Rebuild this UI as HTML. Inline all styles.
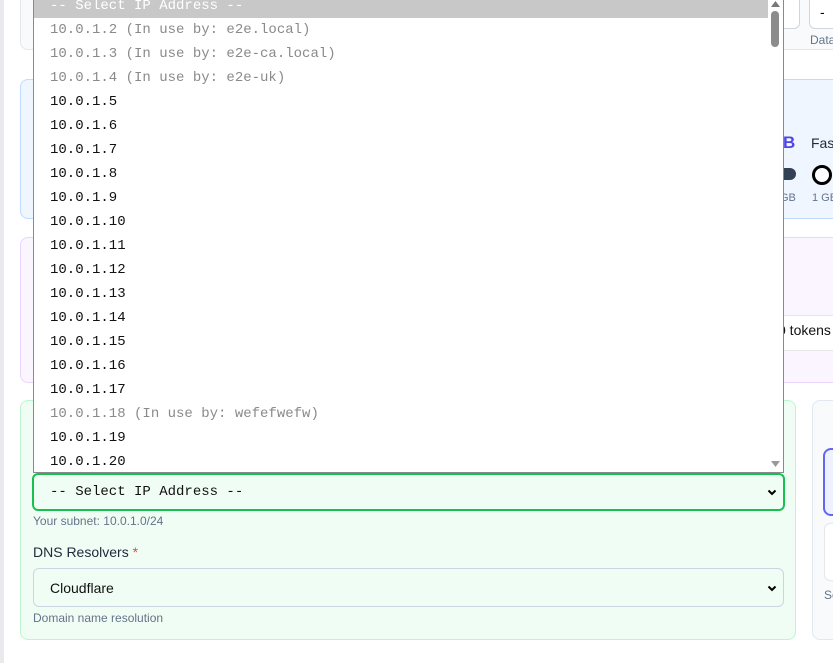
<!DOCTYPE html>
<html><head><style>
body{margin:0;width:833px;height:663px;overflow:hidden;background:#fff;font-family:"Liberation Sans",sans-serif;position:relative}
.strip{position:absolute;left:0;top:0;width:4px;height:663px;background:#e8eaee}
.card{position:absolute;border-radius:8px;box-sizing:border-box}
.list{position:absolute;left:33px;top:-7px;width:751px;height:480px;background:#fff;border:1px solid #8a8a8a;box-sizing:border-box;font-family:"Liberation Mono",monospace;font-size:14px;overflow:hidden}
.row{height:24px;line-height:24px;padding-left:16px;color:#111}
.dis{color:#8a8a8a}
.sel{background:#c8c8c8;color:#fff}
.sb{position:absolute;right:0;top:0;width:15px;height:100%;background:#fff}
.thumb{position:absolute;right:4px;top:16px;width:8px;height:36px;border-radius:4px;background:#8c8c8c}
.select{position:absolute;box-sizing:border-box;border-radius:6px;font-size:14px;display:flex;align-items:center;padding-left:16px}
.chev{position:absolute;right:6px;top:50%;margin-top:-5px}
.small{position:absolute;font-size:12px;color:#64748b;white-space:nowrap}
</style></head><body>
<div class="strip"></div>
<div class="card" style="left:20px;top:-10px;width:830px;height:60px;background:#f9fafb;border:1px solid #e5e7eb"></div>
<div style="position:absolute;left:730px;top:-5px;width:68px;height:32px;border:1px solid #d1d5db;border-radius:6px;background:#fff"></div>
<div style="position:absolute;left:809px;top:-5px;width:40px;height:32px;border:1px solid #d1d5db;border-radius:6px;background:#fff;font-size:14px;line-height:32px;padding-left:10px">-</div>
<div class="small" style="left:810px;top:33px;color:#64748b">Data</div>
<div class="card" style="left:20px;top:79px;width:830px;height:140px;background:#eff6ff;border:1px solid #bfdbfe"></div>
<div style="position:absolute;left:783px;top:133px;font-size:17px;font-weight:bold;color:#4f46e5">B</div>
<div style="position:absolute;left:811px;top:135px;font-size:14px;color:#1f2937">Fas</div>
<div style="position:absolute;left:770px;top:168px;width:26px;height:12px;border-radius:6px;background:#334155"></div>
<div style="position:absolute;left:812px;top:165px;width:14px;height:14px;border-radius:50%;border:3px solid #000;background:#fff"></div>
<div class="small" style="left:780px;top:192px;font-size:11px">GB</div>
<div class="small" style="left:812px;top:192px;font-size:11px">1 GB</div>
<div class="card" style="left:20px;top:237px;width:830px;height:146px;background:#faf5ff;border:1px solid #e9d5ff"></div>
<div style="position:absolute;left:700px;top:315px;width:150px;height:34px;border:1px solid #e5e7eb;border-radius:6px;background:#fff"></div>
<div style="position:absolute;left:778px;top:322px;font-size:14px;color:#111;white-space:nowrap">0 tokens</div>
<div class="card" style="left:20px;top:400px;width:776px;height:240px;background:#f0fdf4;border:1px solid #bbf7d0"></div>
<div class="card" style="left:812px;top:400px;width:40px;height:240px;background:#f8fafc;border:1px solid #e2e8f0"></div>
<div style="position:absolute;left:823px;top:448px;width:30px;height:64px;border:2px solid #6366f1;border-radius:8px;background:#eef2ff"></div>
<div style="position:absolute;left:824px;top:523px;width:30px;height:56px;border-radius:6px;background:#fff;border:1px solid #e5e7eb"></div>
<div class="small" style="left:824px;top:588px">Se</div>
<div class="select" style="left:32px;top:473px;width:753px;height:38px;border:2px solid #16c14f;font-family:'Liberation Mono',monospace;color:#111">-- Select IP Address --<svg class="chev" width="10" height="10" viewBox="0 0 10 10"><path d="M1.5 3.5L5 7L8.5 3.5" stroke="#000" stroke-width="2" fill="none"/></svg></div>
<div class="small" style="left:33px;top:514px">Your subnet: 10.0.1.0/24</div>
<div style="position:absolute;left:33px;top:544px;font-size:14px;color:#1e293b">DNS Resolvers <span style="color:#ef4444">*</span></div>
<div class="select" style="left:33px;top:568px;width:751px;height:39px;border:1px solid #cbd5e1;color:#111;background:#f0fdf4">Cloudflare<svg class="chev" width="10" height="10" viewBox="0 0 10 10"><path d="M1.5 3.5L5 7L8.5 3.5" stroke="#000" stroke-width="2" fill="none"/></svg></div>
<div class="small" style="left:33px;top:611px">Domain name resolution</div>
<div class="list">
<div class="row sel">-- Select IP Address --</div>
<div class="row dis">10.0.1.2 (In use by: e2e.local)</div>
<div class="row dis">10.0.1.3 (In use by: e2e-ca.local)</div>
<div class="row dis">10.0.1.4 (In use by: e2e-uk)</div>
<div class="row">10.0.1.5</div>
<div class="row">10.0.1.6</div>
<div class="row">10.0.1.7</div>
<div class="row">10.0.1.8</div>
<div class="row">10.0.1.9</div>
<div class="row">10.0.1.10</div>
<div class="row">10.0.1.11</div>
<div class="row">10.0.1.12</div>
<div class="row">10.0.1.13</div>
<div class="row">10.0.1.14</div>
<div class="row">10.0.1.15</div>
<div class="row">10.0.1.16</div>
<div class="row">10.0.1.17</div>
<div class="row dis">10.0.1.18 (In use by: wefefwefw)</div>
<div class="row">10.0.1.19</div>
<div class="row">10.0.1.20</div>
<div class="sb"><svg style="position:absolute;left:3px;top:7px" width="9" height="6"><path d="M0 6L4.5 0L9 6Z" fill="#777"/></svg><div class="thumb" style="top:17px"></div><svg style="position:absolute;left:3px;bottom:5px" width="9" height="6"><path d="M0 0L4.5 6L9 0Z" fill="#999"/></svg></div>
</div>
</body></html>
